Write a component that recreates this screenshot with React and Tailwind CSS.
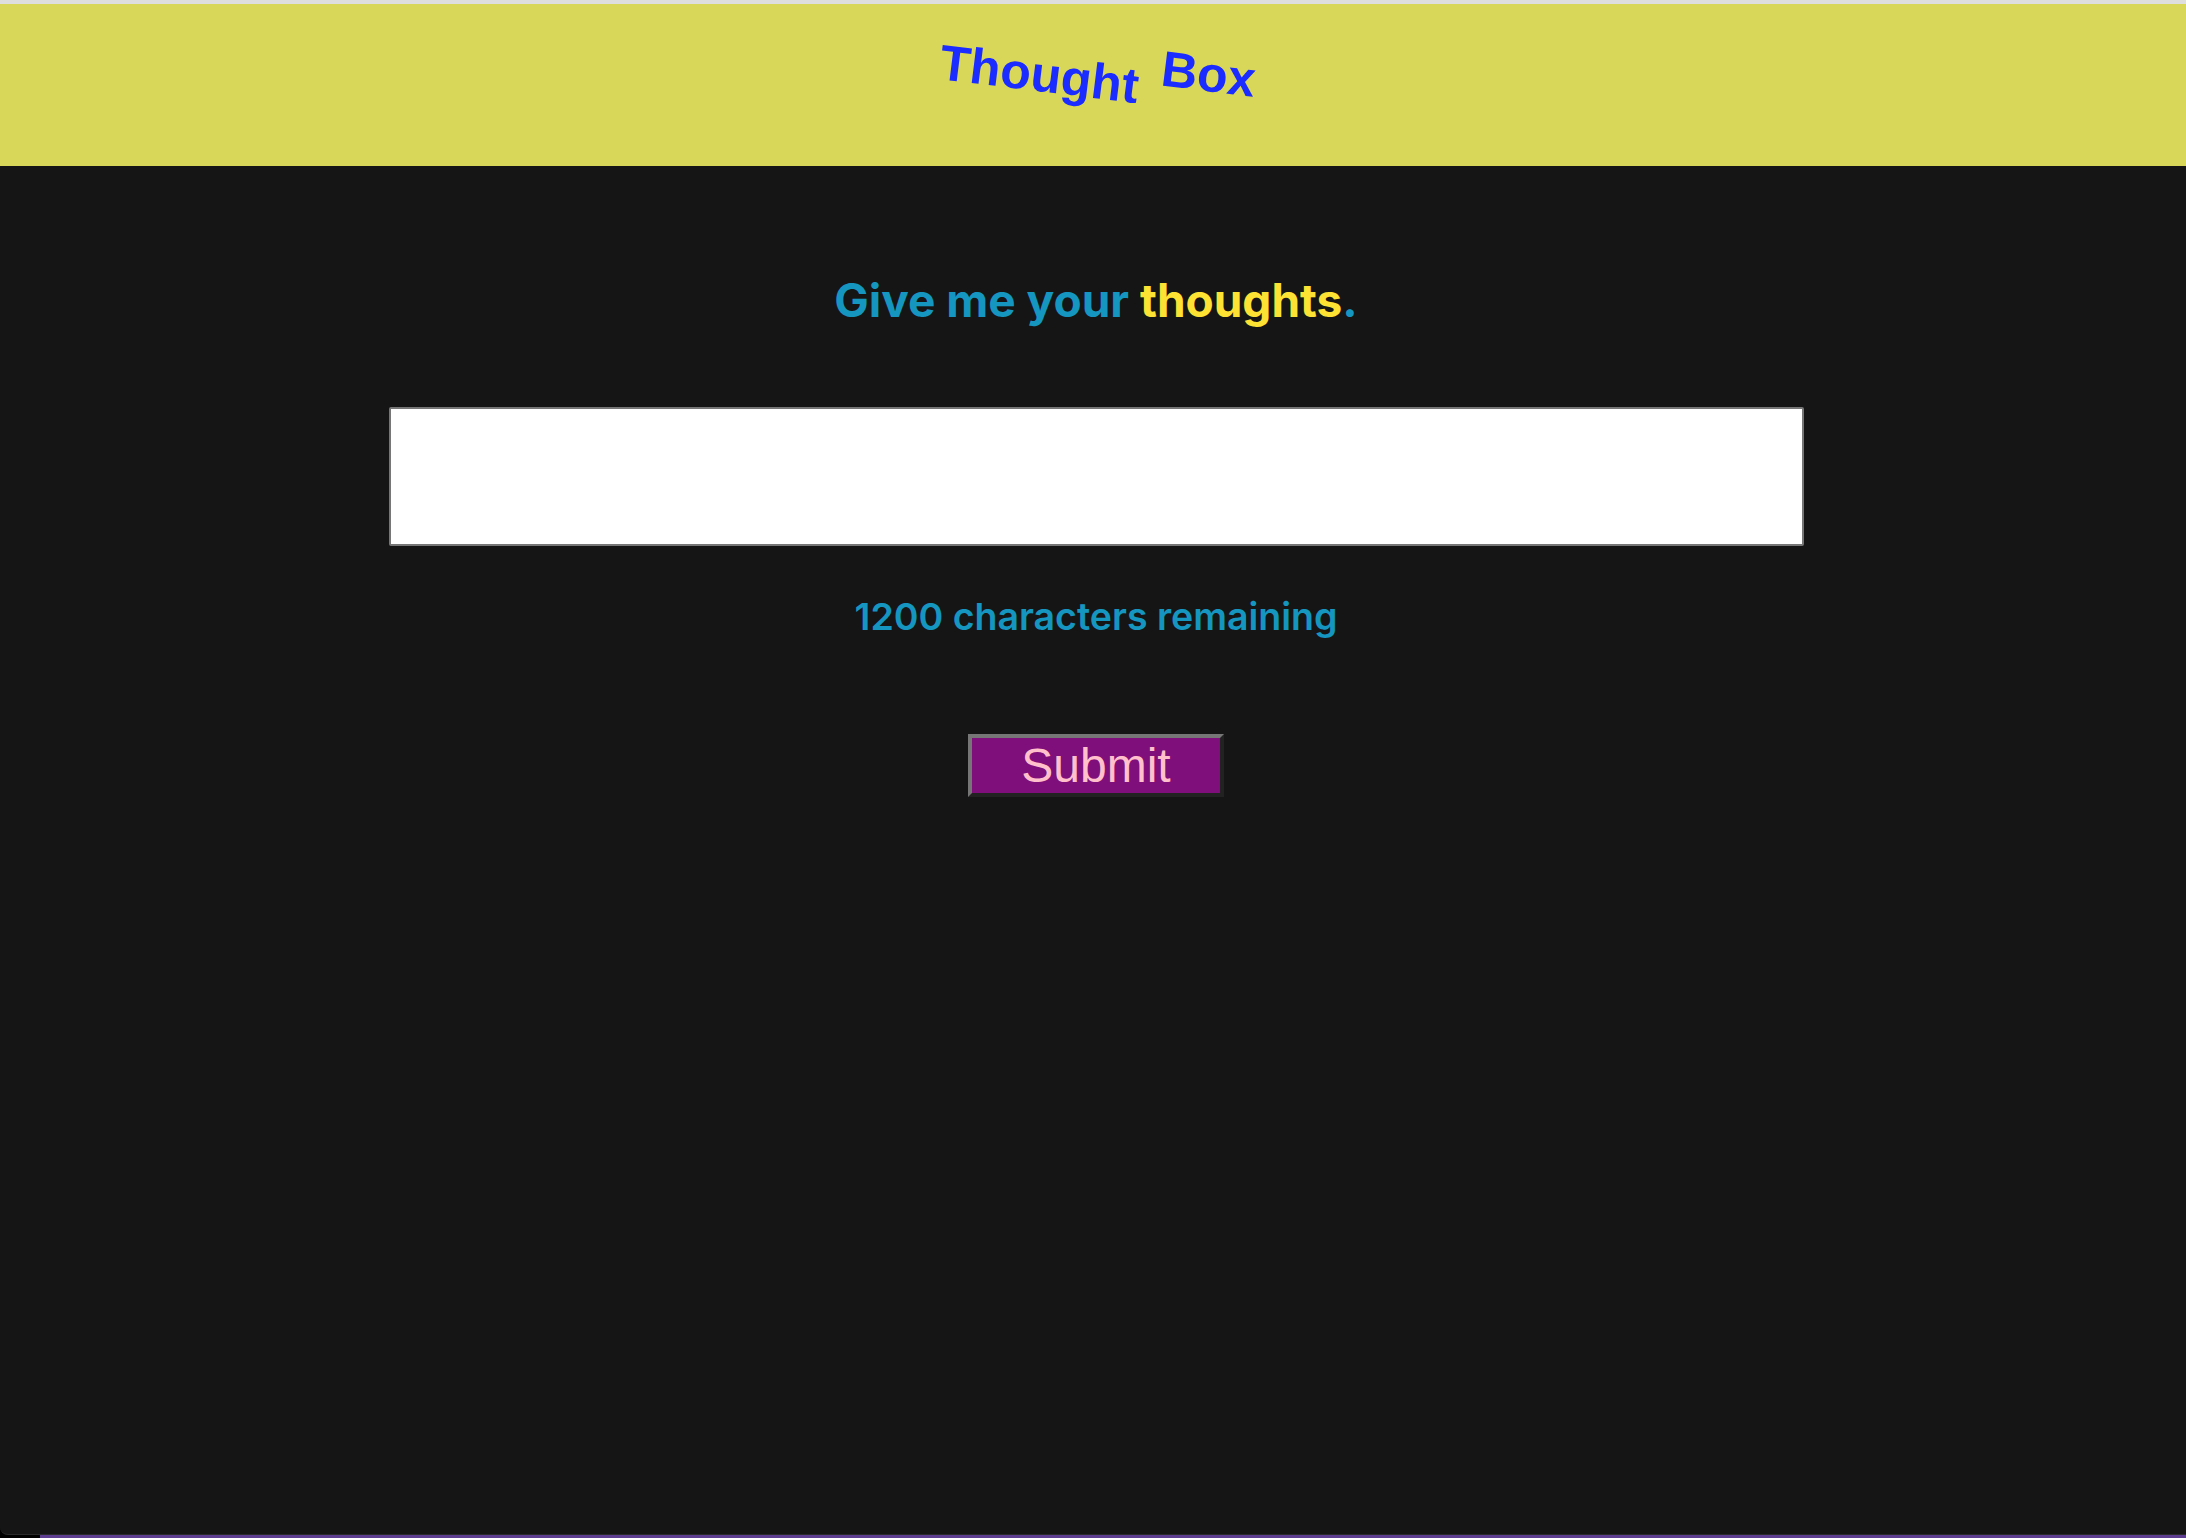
export default function App() {
  return (
    <div className="w-[2186px] h-[1538px] flex flex-col bg-black overflow-hidden">
      <div className="h-[4px] bg-[#dedede] shrink-0" />
      <header className="h-[162px] shrink-0 bg-[#d9d75a] flex justify-center pt-[33px] pl-[2px]">
        <div
          className="flex gap-[22px] text-[50px] font-bold text-[#1a2cff] leading-normal"
          style={{ fontFamily: '"Liberation Sans", Arial, sans-serif' }}
        >
          <span className="inline-block rotate-[7deg]">Thought</span>
          <span className="inline-block rotate-[7deg]">Box</span>
        </div>
      </header>
      <main
        className="flex-1 bg-[#151515] rounded-bl-[8px] border-b border-[#2a2a2a] flex flex-col items-center pt-[100px] pl-[6px]"
        style={{ fontFamily: 'Inter, "Noto Sans", sans-serif' }}
      >
        <h1 className="text-[46px] font-bold leading-normal text-[#1596c1]">
          Give me your <span className="text-[#fde234]">thoughts</span>.
        </h1>
        <textarea className="block mt-[72px] w-[1415px] h-[139px] bg-white border-2 border-[#767676] rounded-[2px] resize-none outline-none" />
        <p className="mt-[43px] text-[37.5px] font-semibold leading-normal text-[#1596c1]">
          1200 characters remaining
        </p>
        <button
          className="mt-[89px] w-[256px] h-[63px] bg-[#7f0f7a] text-[#ffc0cb] text-[48px] leading-none border-4 border-solid border-t-[#767676] border-l-[#767676] border-r-[#222222] border-b-[#222222] flex items-center justify-center"
          style={{ fontFamily: '"Liberation Sans", Arial, sans-serif' }}
        >
          Submit
        </button>
      </main>
      <div className="h-[3px] shrink-0 flex">
        <div className="w-[40px] bg-black" />
        <div className="flex-1 bg-[#5c3d8f]" />
      </div>
    </div>
  );
}
